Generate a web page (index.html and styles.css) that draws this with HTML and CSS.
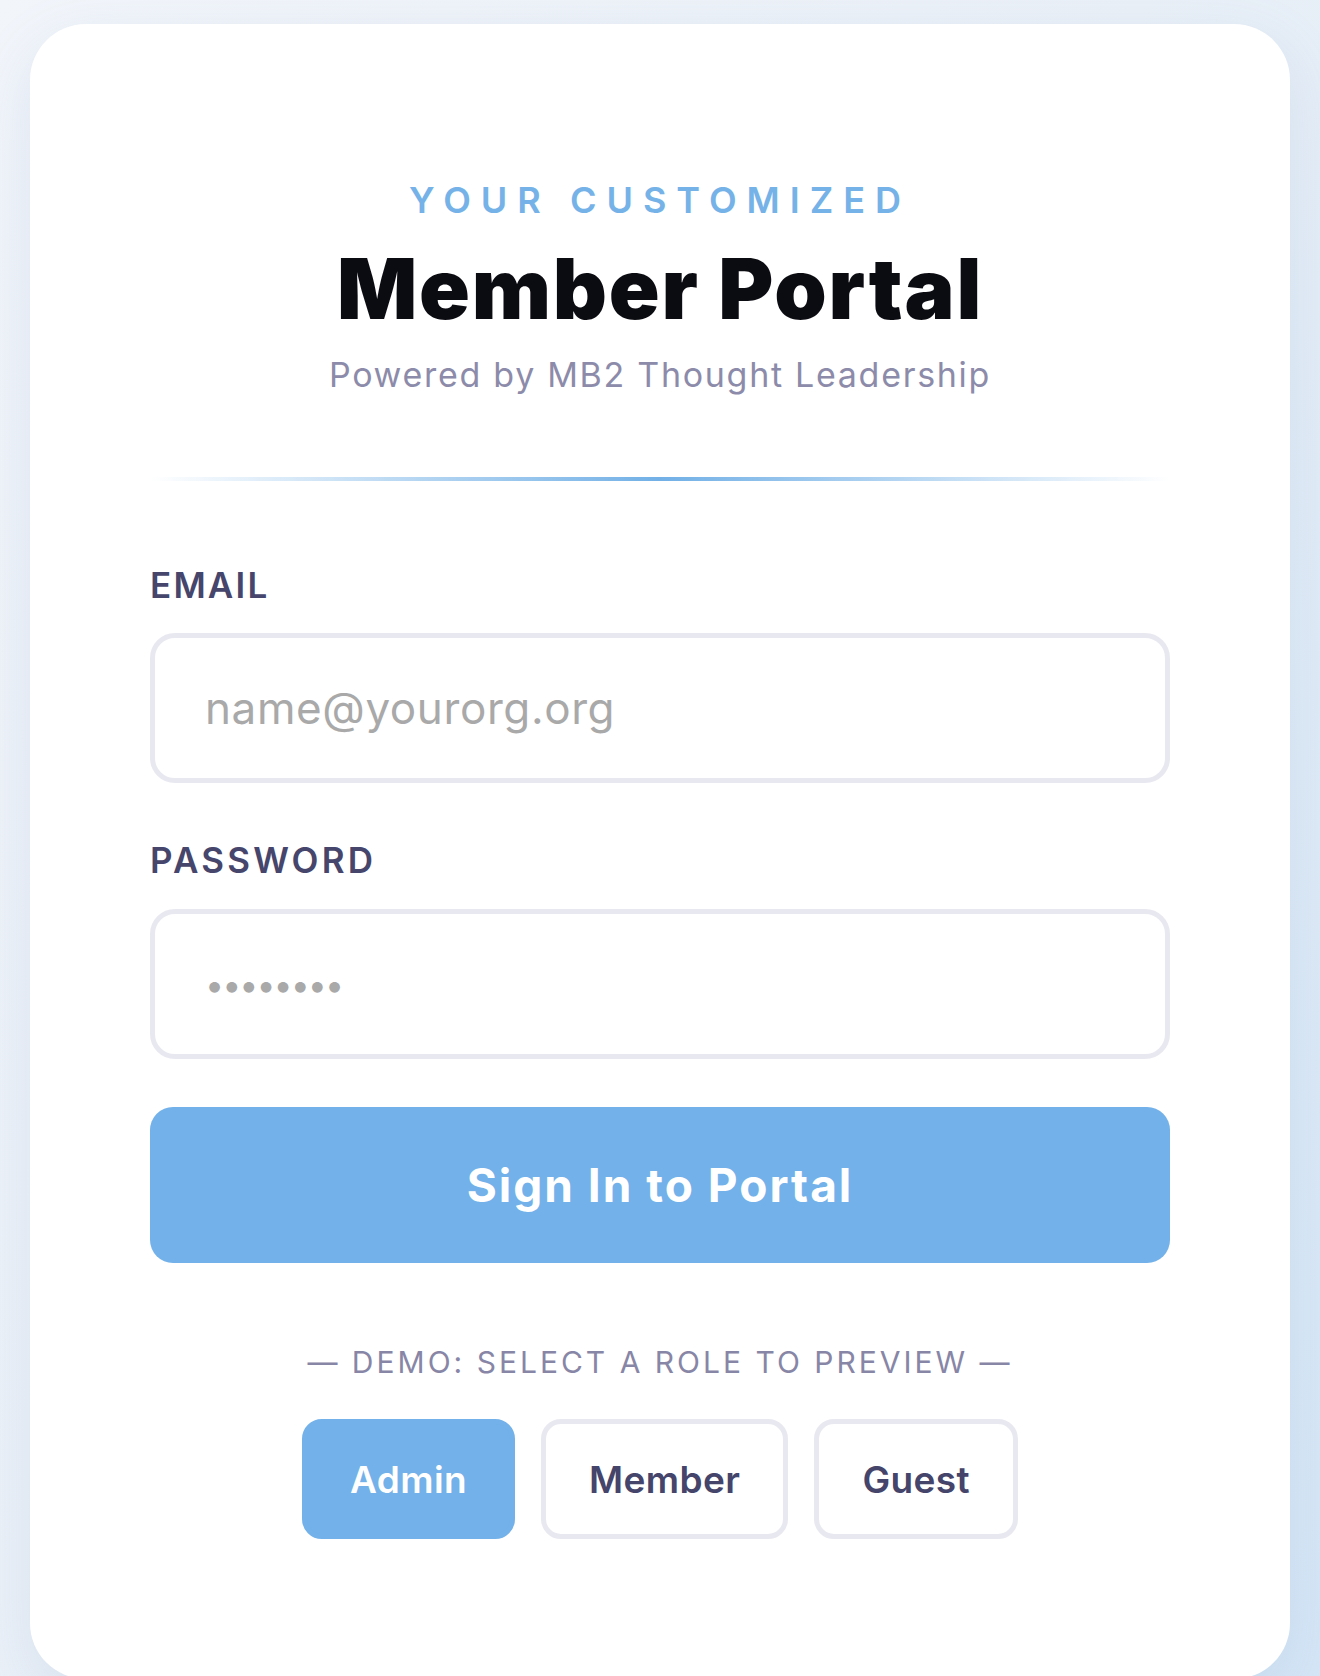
FILE: index.html
```html
<!DOCTYPE html>
<html lang="en">
<head>
    <meta charset="UTF-8">
    <meta name="viewport" content="width=device-width, initial-scale=1.0">
    <title>Member Portal</title>
    <link rel="stylesheet" href="styles.css">
</head>
<body>
    <div class="card">
        <p class="eyebrow">Your Customized</p>
        <h1 class="title">Member Portal</h1>
        <p class="subtitle">Powered by MB2 Thought Leadership</p>
        <div class="divider"></div>

        <form class="login">
            <label class="field-label" for="email">Email</label>
            <input class="field" id="email" type="email" placeholder="name@yourorg.org">

            <label class="field-label pw-label" for="password">Password</label>
            <input class="field password" id="password" type="password" placeholder="••••••••">

            <button class="submit" type="button">Sign In to Portal</button>
        </form>

        <p class="demo">— Demo: select a role to preview —</p>
        <div class="roles">
            <button class="role active">Admin</button>
            <button class="role">Member</button>
            <button class="role">Guest</button>
        </div>
    </div>
</body>
</html>
```

FILE: styles.css
```css
* {
    box-sizing: border-box;
}
body {
    margin: 0;
    padding: 24px 30px 0;
    min-height: 100vh;
    background: linear-gradient(120deg, #f2f5fa 0%, #eaf0f7 50%, #d5e6f6 100%);
    font-family: "Inter", "Noto Sans", sans-serif;
}
.card {
    background: #fff;
    border-radius: 56px;
    padding: 154px 120px 140px;
    box-shadow: 0 20px 60px rgba(110, 150, 200, 0.16);
    text-align: center;
}
.eyebrow {
    margin: 0;
    font-size: 36px;
    line-height: 44px;
    font-weight: 600;
    letter-spacing: 10px;
    text-transform: uppercase;
    color: #75b2e8;
}
.title {
    margin: 22px 0 0;
    font-size: 84px;
    line-height: 89px;
    font-weight: 900;
    letter-spacing: 1.8px;
    color: #0b0b12;
}
.subtitle {
    margin: 22px 0 0;
    font-size: 34px;
    line-height: 40px;
    font-weight: 400;
    letter-spacing: 1.7px;
    color: #8d8baa;
}
.divider {
    height: 4px;
    margin-top: 82px;
    background: linear-gradient(90deg, rgba(114, 177, 233, 0) 0%, #72b0e6 50%, rgba(114, 177, 233, 0) 100%);
}
.login {
    display: flex;
    flex-direction: column;
    text-align: left;
}
.field-label {
    margin-top: 83px;
    font-size: 35px;
    line-height: 42px;
    font-weight: 600;
    letter-spacing: 2.2px;
    text-transform: uppercase;
    color: #46456b;
}
.pw-label {
    margin-top: 56px;
    letter-spacing: 3.2px;
}
.field {
    margin-top: 27px;
    width: 100%;
    height: 150px;
    padding: 0 50px;
    border: 5px solid #e8e8f0;
    border-radius: 25px;
    background: #fff;
    font-family: inherit;
    font-size: 44px;
    letter-spacing: 0.6px;
    color: #333;
    outline: none;
}
.field::placeholder {
    color: #a9a9a9;
}
.password {
    margin-top: 28px;
    font-size: 34px;
    letter-spacing: -2px;
}
.submit {
    margin-top: 48px;
    height: 156px;
    border: none;
    border-radius: 23px;
    background: #72b1e9;
    color: #fff;
    font-family: inherit;
    font-size: 46px;
    font-weight: 700;
    letter-spacing: 2px;
}
.demo {
    margin: 81px 0 0;
    font-size: 30px;
    line-height: 36px;
    letter-spacing: 3px;
    text-transform: uppercase;
    color: #8886a6;
}
.roles {
    display: flex;
    justify-content: center;
    gap: 26px;
    margin-top: 39px;
}
.role {
    height: 120px;
    padding: 0 43px;
    border: 5px solid #e8e8f0;
    border-radius: 20px;
    background: #fff;
    color: #45446a;
    font-family: inherit;
    font-size: 37px;
    font-weight: 600;
    letter-spacing: 0.4px;
}
.role.active {
    background: #72b1e9;
    border-color: #72b1e9;
    color: #fff;
}
```
